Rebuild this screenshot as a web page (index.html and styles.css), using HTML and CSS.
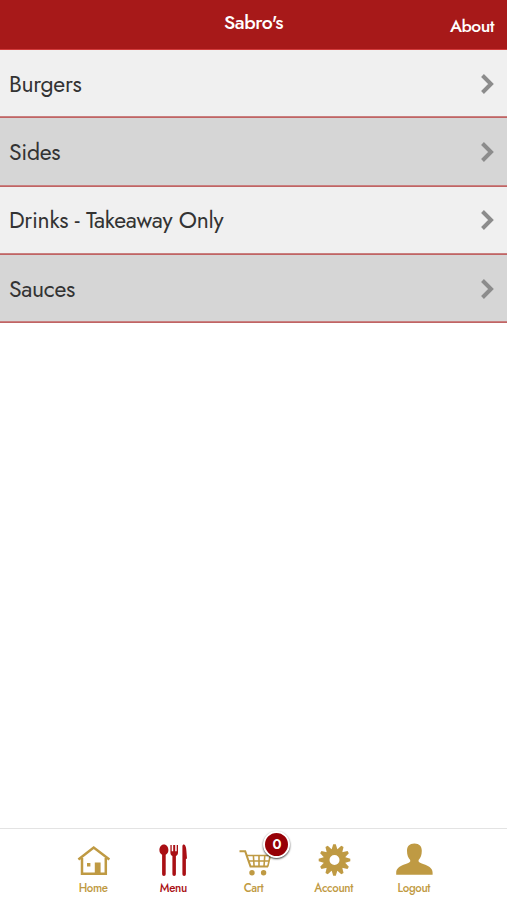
FILE: index.html
```html
<!DOCTYPE html>
<html lang="en">
<head>
  <meta charset="utf-8">
  <meta name="viewport" content="width=device-width, initial-scale=1">
  <title>Sabro's</title>
  <link rel="stylesheet" href="styles.css">
</head>
<body>
  <header class="header">
    <h1 class="title">Sabro's</h1>
    <a class="about" href="#">About</a>
  </header>

  <main class="menu-list">
    <a class="menu-row" href="#">
      <span>Burgers</span>
      <svg class="chevron" viewBox="0 0 14 22"><path d="M2 2.5l8.5 8.5L2 19.5"/></svg>
    </a>
    <a class="menu-row" href="#">
      <span>Sides</span>
      <svg class="chevron" viewBox="0 0 14 22"><path d="M2 2.5l8.5 8.5L2 19.5"/></svg>
    </a>
    <a class="menu-row" href="#">
      <span>Drinks - Takeaway Only</span>
      <svg class="chevron" viewBox="0 0 14 22"><path d="M2 2.5l8.5 8.5L2 19.5"/></svg>
    </a>
    <a class="menu-row" href="#">
      <span>Sauces</span>
      <svg class="chevron" viewBox="0 0 14 22"><path d="M2 2.5l8.5 8.5L2 19.5"/></svg>
    </a>
  </main>

  <nav class="tabs">
    <a class="tab" href="#">
      <svg class="icon" viewBox="0 0 40 36">
        <path class="line" d="M5.4 17.5L20.7 5.5l15.7 12M9 16v15.7h23.8V16"/>
        <path d="M21.8 20.5h5.8v11.8h-5.8zM14 21h3.4v3.4H14z"/>
      </svg>
      <span>Home</span>
    </a>
    <a class="tab active" href="#">
      <svg class="icon" viewBox="0 0 40 36">
        <path d="M10.9 2.5c2.8 0 4.5 2.7 4.5 5.4 0 2.5-1.2 4-2.7 4.8v19.6a1.8 1.8 0 0 1-3.6 0V12.7c-1.5-.8-2.7-2.3-2.7-4.8 0-2.7 1.7-5.4 4.5-5.4z"/>
        <path d="M17.4 3h1.3v6.3h1.5V3h2v6.3h1.5V3H25v7.5c0 1.8-.8 3-2.1 3.6v18.2a1.75 1.75 0 0 1-3.5 0V14.1c-1.3-.6-2-1.8-2-3.6z"/>
        <path d="M29.4 4.2c0-1.2.8-1.8 1.5-1.7 1.8.4 2.4 3.8 2.5 6.5l.6 7.8h-1.1v15.5a1.75 1.75 0 0 1-3.5 0z"/>
      </svg>
      <span>Menu</span>
    </a>
    <a class="tab" href="#">
      <svg class="icon" viewBox="0 0 40 36">
        <path class="line thin" d="M5.5 9.3h5.7l5.3 15.2h17.5"/>
        <path class="wire" d="M12.5 13.5h23.8l-2.5 11M14.5 19h20.5M19.4 13.5l.7 11M25 13.5v11M30.8 13.5l-.8 11"/>
        <circle cx="18" cy="30.8" r="2.7"/>
        <circle cx="29.6" cy="30.8" r="2.7"/>
      </svg>
      <span>Cart</span>
      <b class="badge">0</b>
    </a>
    <a class="tab" href="#">
      <svg class="icon" viewBox="0 0 40 36">
        <defs><path id="tooth" d="M17.2 8.7L19.2 2.2h2.6l2 6.5z"/></defs>
        <circle class="gear-ring" cx="20.5" cy="18" r="8"/>
        <use href="#tooth"/>
        <use href="#tooth" transform="rotate(30 20.5 18)"/>
        <use href="#tooth" transform="rotate(60 20.5 18)"/>
        <use href="#tooth" transform="rotate(90 20.5 18)"/>
        <use href="#tooth" transform="rotate(120 20.5 18)"/>
        <use href="#tooth" transform="rotate(150 20.5 18)"/>
        <use href="#tooth" transform="rotate(180 20.5 18)"/>
        <use href="#tooth" transform="rotate(210 20.5 18)"/>
        <use href="#tooth" transform="rotate(240 20.5 18)"/>
        <use href="#tooth" transform="rotate(270 20.5 18)"/>
        <use href="#tooth" transform="rotate(300 20.5 18)"/>
        <use href="#tooth" transform="rotate(330 20.5 18)"/>
      </svg>
      <span>Account</span>
    </a>
    <a class="tab" href="#">
      <svg class="icon" viewBox="0 0 40 36">
        <path d="M20.4 1.6c5 0 7.4 3 7.4 7.2 0 4.1-1.2 7.4-3.2 9.2v1.6c1 1.4 3.7 2 6.7 3.2 4.5 1.8 7.3 4.1 7.3 8v2H2.2v-2c0-3.9 2.8-6.2 7.3-8 3.2-1.2 5.7-1.8 6.7-3.2V18c-2-1.8-3.2-5.1-3.2-9.2 0-4.2 2.4-7.2 7.4-7.2z"/>
      </svg>
      <span>Logout</span>
    </a>
  </nav>
</body>
</html>
```

FILE: styles.css
```css
* {
  box-sizing: border-box;
}

body {
  display: flex;
  flex-direction: column;
  height: 100vh;
  margin: 0;
  overflow: hidden;
  background-color: #fff;
  font-family: Jost, Lato, sans-serif;
}

a {
  color: inherit;
  text-decoration: none;
}

.header {
  display: grid;
  grid-template-columns: 1fr auto 1fr;
  height: 50px;
  padding: 0 13px;
  border-bottom: 1px solid #d23b3b;
  background-color: #a71919;
  color: #fff;
}

.title {
  grid-column: 2;
  margin: 10px 0 0;
  font-size: 19.5px;
  font-weight: 500;
  letter-spacing: -0.4px;
  line-height: 24px;
}

.about {
  justify-self: end;
  margin-top: 14px;
  font-size: 17.5px;
  font-weight: 500;
  letter-spacing: -0.5px;
  line-height: 24px;
}

.menu-list {
  flex: 1;
}

.menu-row {
  display: flex;
  align-items: center;
  justify-content: space-between;
  height: 68.35px;
  padding: 0 12px 0 9px;
  border-bottom: 1px solid #c06464;
  background-color: #f0f0f0;
  box-shadow: inset 0 -1px #c98080;
  color: #333;
  font-size: 23px;
  letter-spacing: -0.3px;
}

.menu-row:nth-child(even) {
  background-color: #d6d6d6;
}

.chevron {
  width: 15px;
  height: 22px;
  fill: none;
  stroke: #8c8c8c;
  stroke-width: 4;
}

.tabs {
  display: flex;
  justify-content: center;
  height: 72px;
  padding-top: 13px;
  border-top: 1px solid #e3e3e3;
}

.tab {
  position: relative;
  display: flex;
  flex-direction: column;
  align-items: center;
  width: 80.2px;
  color: #bf9a43;
  font-size: 11.5px;
  font-weight: 500;
  letter-spacing: -0.35px;
  line-height: 14px;
}

.tab.active {
  color: #a90f14;
}

.icon {
  width: 40px;
  height: 36px;
  margin-bottom: 3px;
  fill: currentColor;
}

.line,
.wire,
.gear-ring {
  fill: none;
  stroke: currentColor;
  stroke-width: 2.5;
}

.thin {
  stroke-width: 2;
}

.wire {
  stroke-width: 1.6;
}

.gear-ring {
  stroke-width: 6;
}

.badge {
  position: absolute;
  top: -11px;
  left: 50px;
  width: 27px;
  height: 27px;
  border: 2px solid #fff;
  border-radius: 50%;
  background-color: #960006;
  box-shadow: 0 1px 2px rgba(0, 0, 0, 0.75);
  color: #fff;
  font-size: 14px;
  font-weight: 600;
  line-height: 23px;
  text-align: center;
}
```
